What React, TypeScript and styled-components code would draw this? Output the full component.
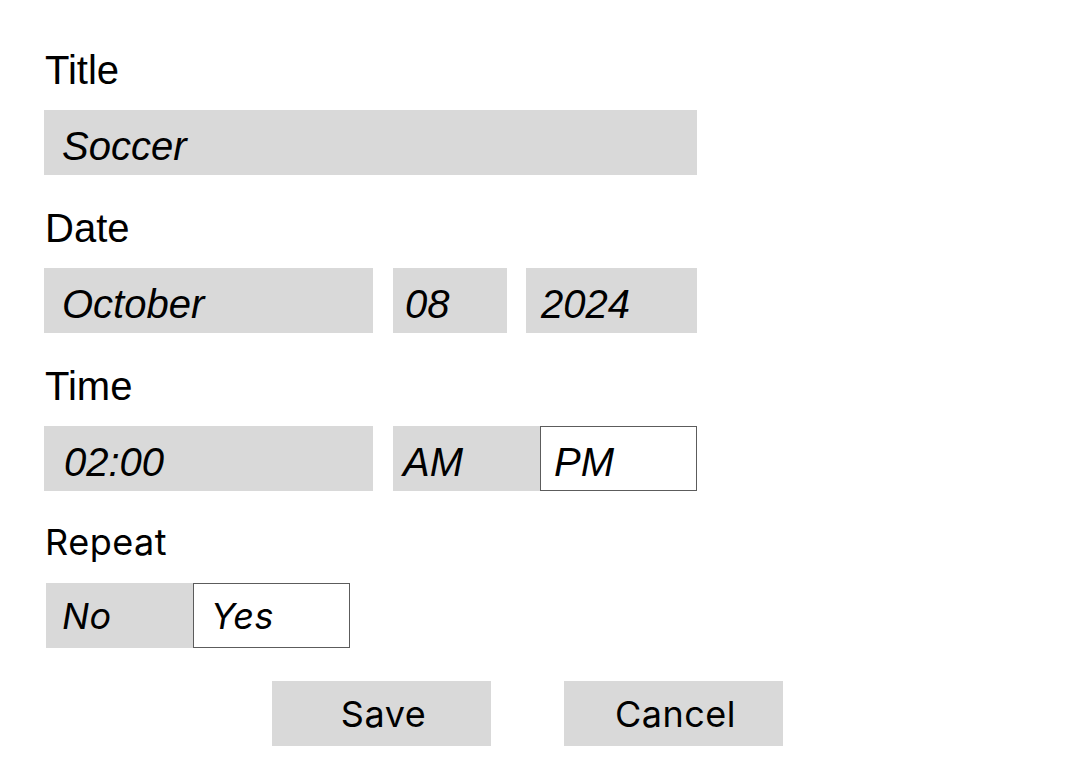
import React from "react";
import styled, { createGlobalStyle } from "styled-components";

const Global = createGlobalStyle`
  html, body { margin: 0; padding: 0; background: #ffffff; }
  body { font-family: "Liberation Sans", Arial, sans-serif; color: #000; }
`;

const sansAlt = `Inter, "Liberation Sans", sans-serif`;
const sansMain = `"Liberation Sans", Arial, sans-serif`;

const Form = styled.form`
  display: flex;
  flex-direction: column;
  align-items: flex-start;
  gap: 29px;
  padding: 46px 0 0 44px;
`;

const Field = styled.div`
  display: flex;
  flex-direction: column;
`;

const Label = styled.div<{ $alt?: boolean }>`
  font-family: ${(p) => (p.$alt ? sansAlt : sansMain)};
  font-size: ${(p) => (p.$alt ? "36px" : "40px")};
  letter-spacing: ${(p) => (p.$alt ? "0.5px" : "0")};
  line-height: ${(p) => (p.$alt ? "44px" : "48px")};
  height: ${(p) => (p.$alt ? "44px" : "48px")};
  margin-bottom: ${(p) => (p.$alt ? "19px" : "16px")};
  margin-left: 1px;
`;

const Row = styled.div<{ $gap?: number; $indent?: number }>`
  display: flex;
  gap: ${(p) => p.$gap ?? 0}px;
  margin-left: ${(p) => p.$indent ?? 0}px;
`;

const Box = styled.div<{ $w: number; $pad?: number; $selected?: boolean; $alt?: boolean }>`
  box-sizing: border-box;
  width: ${(p) => p.$w}px;
  height: 65px;
  display: flex;
  align-items: center;
  padding-left: ${(p) => p.$pad ?? 18}px;
  padding-top: ${(p) => (p.$alt ? 0 : 7)}px;
  background: ${(p) => (p.$selected ? "#ffffff" : "#d9d9d9")};
  border: ${(p) => (p.$selected ? "1px solid #5c5c5c" : "none")};
  font-family: ${(p) => (p.$alt ? sansAlt : sansMain)};
  font-style: italic;
  font-size: ${(p) => (p.$alt ? "36px" : "40px")};
  letter-spacing: ${(p) => (p.$alt ? "0.5px" : "0")};
  line-height: 46px;
  flex-shrink: 0;
`;

const Actions = styled.div`
  display: flex;
  gap: 73px;
  padding-left: 228px;
  margin-top: 4px;
`;

const Button = styled.button`
  box-sizing: border-box;
  width: 219px;
  height: 65px;
  flex-shrink: 0;
  border: none;
  background: #d9d9d9;
  font-family: ${sansAlt};
  font-size: 36px;
  letter-spacing: 0.5px;
  color: #000;
  display: flex;
  align-items: center;
  justify-content: center;
  padding: 0 0 0 4px;
  cursor: pointer;
`;

export default function App() {
  return (
    <>
      <Global />
      <Form onSubmit={(e) => e.preventDefault()}>
        <Field>
          <Label>Title</Label>
          <Box $w={653}>Soccer</Box>
        </Field>
        <Field>
          <Label>Date</Label>
          <Row>
            <Box $w={329}>October</Box>
            <Row $indent={20}>
              <Box $w={114} $pad={12}>08</Box>
            </Row>
            <Row $indent={19}>
              <Box $w={171} $pad={15}>2024</Box>
            </Row>
          </Row>
        </Field>
        <Field>
          <Label>Time</Label>
          <Row $gap={20}>
            <Box $w={329} $pad={20}>02:00</Box>
            <Row>
              <Box $w={147} $pad={10}>AM</Box>
              <Box $w={157} $pad={13} $selected>PM</Box>
            </Row>
          </Row>
        </Field>
        <Field>
          <Label $alt>Repeat</Label>
          <Row $indent={2}>
            <Box $w={147} $pad={16} $alt>No</Box>
            <Box $w={157} $pad={17} $alt $selected>Yes</Box>
          </Row>
        </Field>
        <Actions>
          <Button type="button">Save</Button>
          <Button type="button">Cancel</Button>
        </Actions>
      </Form>
    </>
  );
}
